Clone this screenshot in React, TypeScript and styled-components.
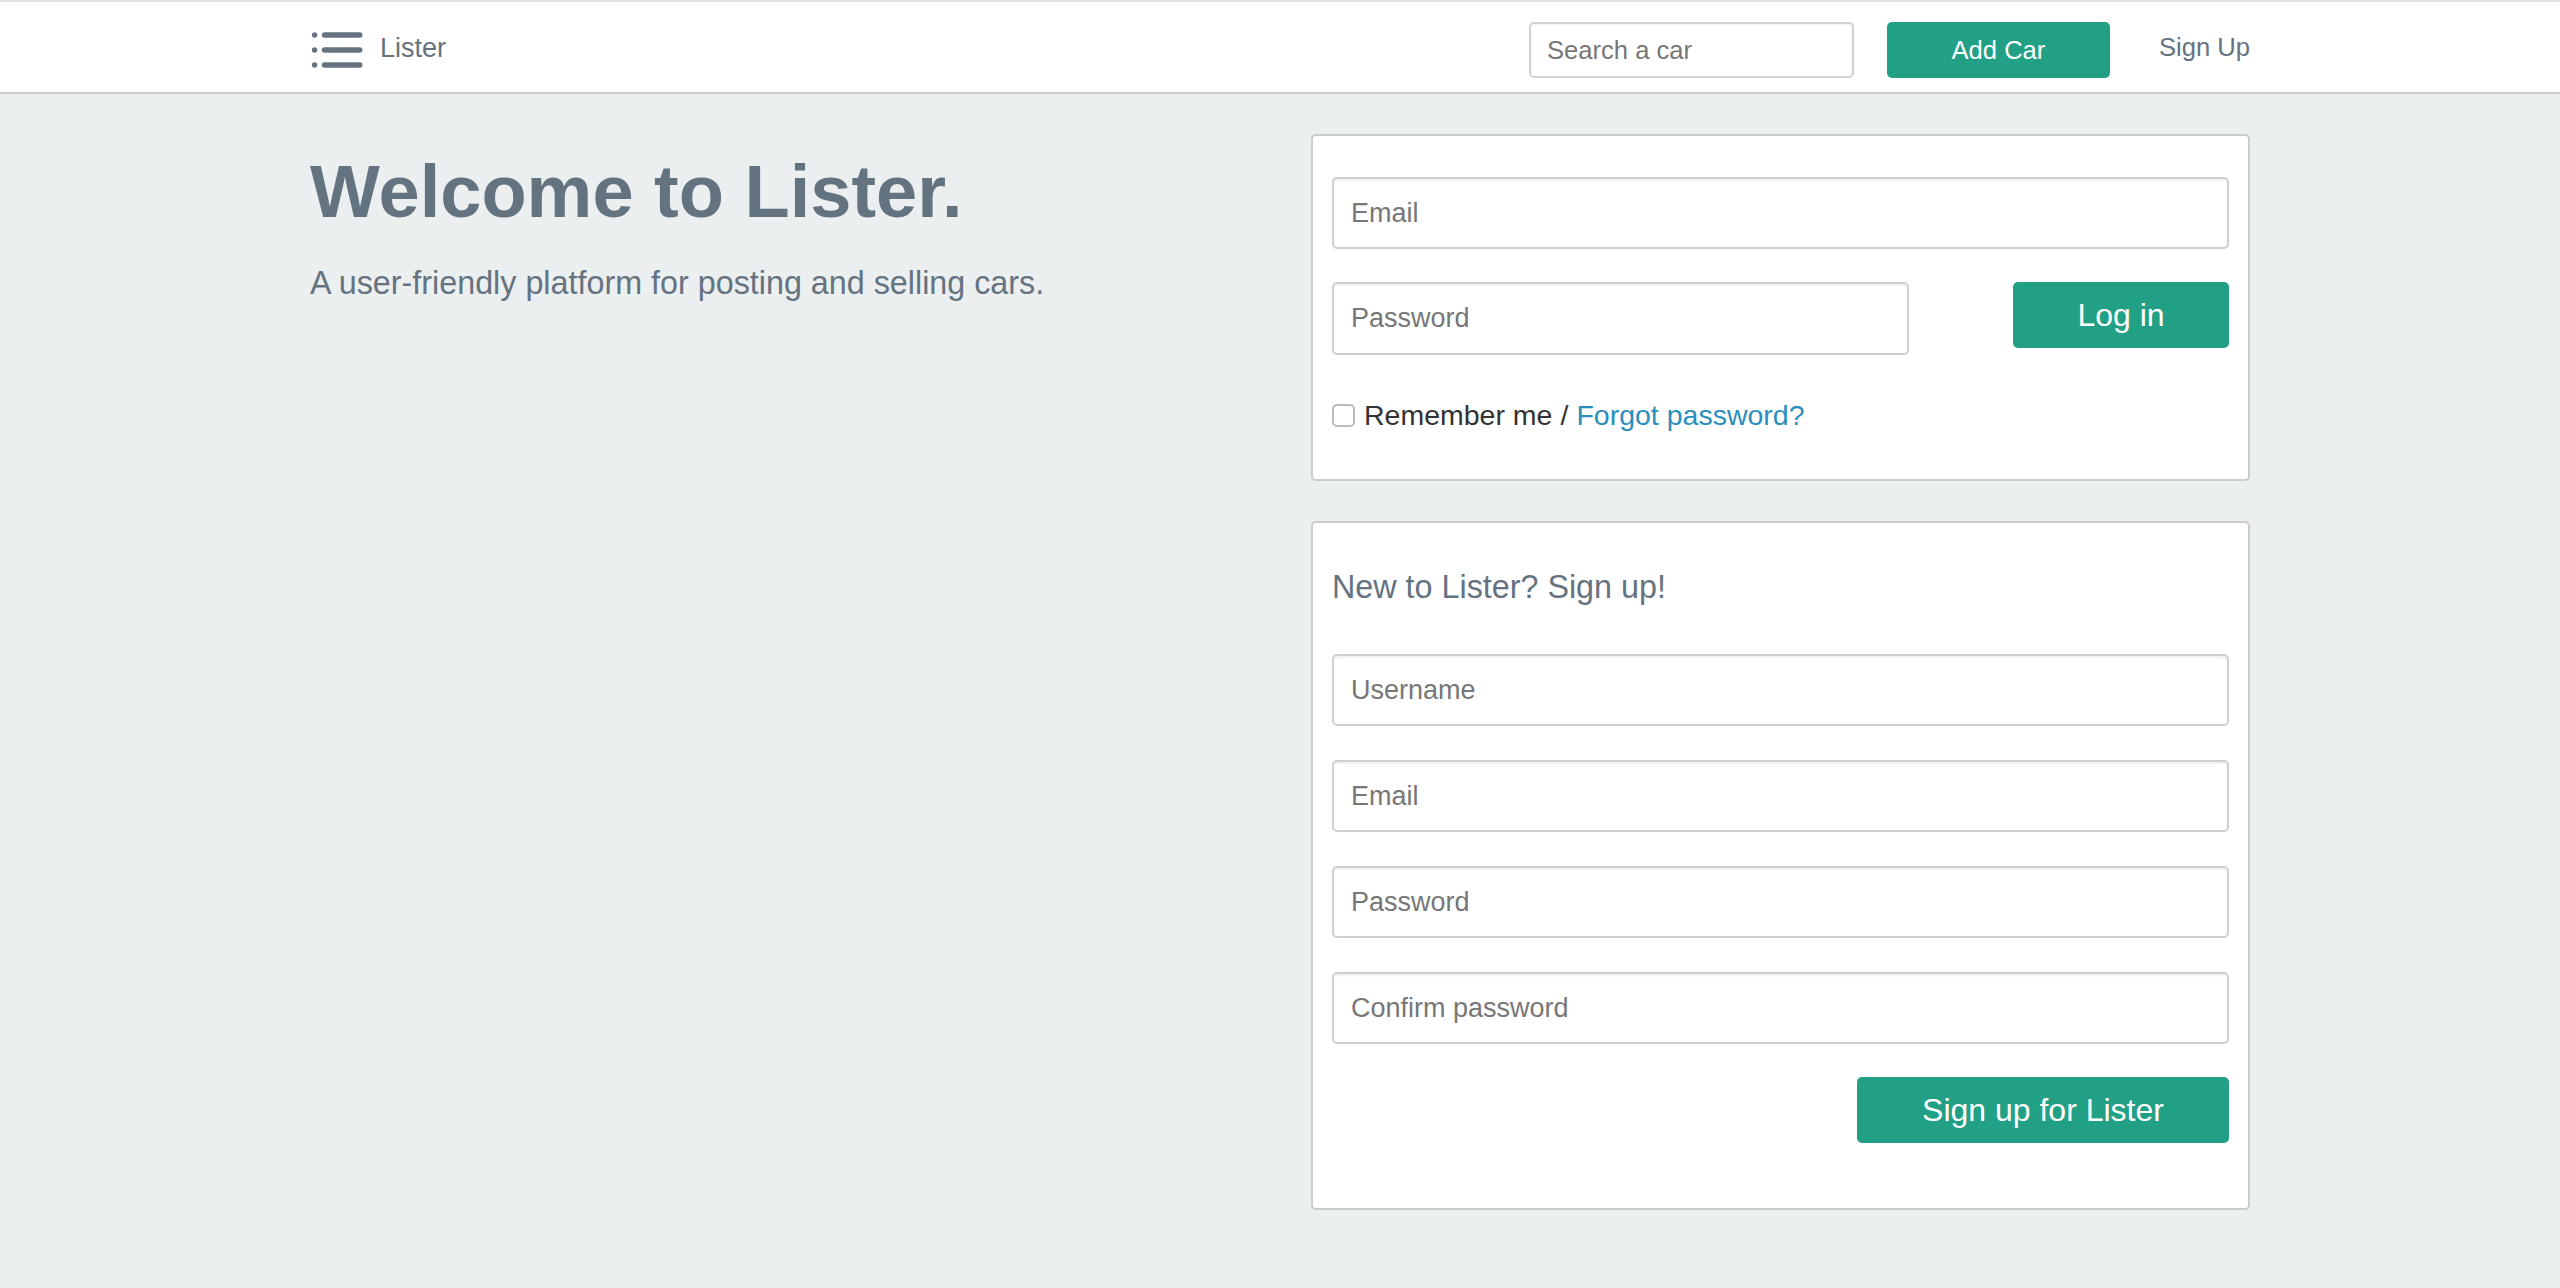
import React from "react";
import styled, { createGlobalStyle } from "styled-components";

const GlobalStyle = createGlobalStyle`
  html, body {
    margin: 0;
    padding: 0;
    background: #ebeff0;
    min-height: 100%;
  }
  body {
    font-family: "Liberation Sans", Arial, Helvetica, sans-serif;
    color: #65737e;
  }
  * { box-sizing: border-box; }
`;

const Page = styled.div`
  min-height: 1288px;
  background: #ebeff0;
`;

const Header = styled.header`
  background: #ffffff;
  border-top: 2px solid #dfe1e2;
  border-bottom: 2px solid #c7ccce;
`;

const Container = styled.div`
  width: 1940px;
  margin: 0 auto;
`;

const NavBar = styled(Container)`
  height: 90px;
  padding-top: 6px;
  display: flex;
  align-items: center;
  justify-content: space-between;
`;

const Brand = styled.a`
  display: flex;
  align-items: center;
  gap: 17px;
  padding-left: 1px;
  color: #657380;
  font-size: 27px;
  text-decoration: none;
  padding-bottom: 4px;
`;

const BrandIcon = styled.svg`
  width: 52px;
  height: 40px;
  margin-top: 3px;
`;

const NavRight = styled.div`
  display: flex;
  align-items: center;
`;

const SearchInput = styled.input`
  width: 325px;
  height: 56px;
  border: 2px solid #d0d3d5;
  border-radius: 5px;
  padding: 0 16px;
  font-family: inherit;
  font-size: 25.6px;
  color: #555;
  background: #fff;
  box-shadow: inset 0 1px 2px rgba(0, 0, 0, 0.06);
  outline: none;
  &::placeholder { color: #777; }
`;

const GreenButton = styled.button<{ $w: number; $h: number; $fs: number }>`
  width: ${(p) => p.$w}px;
  height: ${(p) => p.$h}px;
  background: #22a085;
  color: #ffffff;
  border: none;
  border-radius: 5px;
  font-family: inherit;
  font-size: ${(p) => p.$fs}px;
  cursor: pointer;
  padding: 0;
`;

const AddCarButton = styled(GreenButton)`
  margin-left: 33px;
`;

const NavLink = styled.a`
  margin-left: 49px;
  font-size: 25.6px;
  color: #657380;
  text-decoration: none;
  padding-bottom: 6px;
`;

const Main = styled(Container)`
  display: grid;
  grid-template-columns: 1fr 939px;
  padding-top: 40px;
  padding-bottom: 40px;
`;

const Intro = styled.div`
  padding-top: 18px;
`;

const Title = styled.h1`
  margin: 0;
  font-size: 74px;
  line-height: 80px;
  font-weight: 700;
  color: #637380;
`;

const Lead = styled.p`
  margin: 31px 0 0;
  font-size: 32.3px;
  line-height: 40px;
  color: #657380;
`;

const Forms = styled.div`
  display: flex;
  flex-direction: column;
  gap: 40px;
`;

const Card = styled.form<{ $pb: number }>`
  background: #ffffff;
  border: 2px solid #c8cdd0;
  border-radius: 5px;
  padding: 41px 19px ${(p) => p.$pb}px;
  display: flex;
  flex-direction: column;
`;

const Field = styled.input<{ $w?: number; $h?: number }>`
  width: ${(p) => (p.$w ? `${p.$w}px` : "100%")};
  height: ${(p) => p.$h ?? 72}px;
  border: 2px solid #cdd0d1;
  border-radius: 5px;
  padding: 0 17px;
  font-family: inherit;
  font-size: 27px;
  color: #555;
  background: #fff;
  box-shadow: inset 0 2px 2px rgba(0, 0, 0, 0.06);
  outline: none;
  &::placeholder { color: #777; }
`;

const Row = styled.div`
  margin-top: 33px;
  display: flex;
  justify-content: space-between;
  align-items: flex-start;
`;

const RememberRow = styled.label`
  margin-top: 45px;
  display: flex;
  align-items: center;
  font-size: 28.5px;
  line-height: 30px;
  color: #333;
`;

const Check = styled.input`
  appearance: none;
  width: 23px;
  height: 23px;
  margin: 0 9px 0 0;
  border: 2px solid #bcbcbc;
  border-radius: 5px;
  background: #fff;
`;

const Slash = styled.span`
  margin: 0 8px;
`;

const Link = styled.a`
  color: #2a8fbd;
  text-decoration: none;
`;

const CardHeading = styled.h3`
  margin: 0 0 44px;
  font-size: 32.3px;
  line-height: 46px;
  font-weight: 400;
  color: #657380;
`;

const Stack = styled.div`
  display: flex;
  flex-direction: column;
  gap: 34px;
`;

const Actions = styled.div`
  margin-top: 33px;
  display: flex;
  justify-content: flex-end;
`;

export default function App() {
  return (
    <Page>
      <GlobalStyle />
      <Header>
        <NavBar>
          <Brand href="#">
            <BrandIcon viewBox="0 0 52 40">
              <g fill="#657380">
                <circle cx="3.6" cy="5" r="2.7" />
                <circle cx="3.6" cy="20" r="2.7" />
                <circle cx="3.6" cy="35" r="2.7" />
              </g>
              <g stroke="#657380" strokeWidth="5.3" strokeLinecap="round">
                <line x1="13.4" y1="5" x2="48.8" y2="5" />
                <line x1="13.4" y1="20" x2="48.8" y2="20" />
                <line x1="13.4" y1="35" x2="48.8" y2="35" />
              </g>
            </BrandIcon>
            Lister
          </Brand>
          <NavRight>
            <SearchInput placeholder="Search a car" />
            <AddCarButton type="button" $w={223} $h={56} $fs={25.6}>
              Add Car
            </AddCarButton>
            <NavLink href="#">Sign Up</NavLink>
          </NavRight>
        </NavBar>
      </Header>
      <Main>
        <Intro>
          <Title>Welcome to Lister.</Title>
          <Lead>A user-friendly platform for posting and selling cars.</Lead>
        </Intro>
        <Forms>
          <Card $pb={49} onSubmit={(e) => e.preventDefault()}>
            <Field type="email" placeholder="Email" />
            <Row>
              <Field type="password" placeholder="Password" $w={577} $h={73} />
              <GreenButton type="submit" $w={216} $h={66} $fs={32}>
                Log in
              </GreenButton>
            </Row>
            <RememberRow>
              <Check type="checkbox" />
              Remember me<Slash>/</Slash>
              <Link href="#">Forgot password?</Link>
            </RememberRow>
          </Card>
          <Card $pb={65} onSubmit={(e) => e.preventDefault()}>
            <CardHeading>New to Lister? Sign up!</CardHeading>
            <Stack>
              <Field type="text" placeholder="Username" />
              <Field type="email" placeholder="Email" />
              <Field type="password" placeholder="Password" />
              <Field type="password" placeholder="Confirm password" />
            </Stack>
            <Actions>
              <GreenButton type="submit" $w={372} $h={66} $fs={32}>
                Sign up for Lister
              </GreenButton>
            </Actions>
          </Card>
        </Forms>
      </Main>
    </Page>
  );
}
